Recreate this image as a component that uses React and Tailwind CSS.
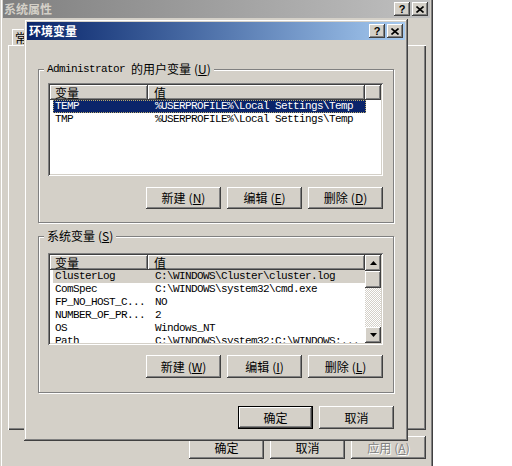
import React from "react";

const cjk = "font-[family-name:'Noto_Sans_CJK_SC',sans-serif]";
const mono = "font-[family-name:'Liberation_Mono','Noto_Sans_CJK_SC',monospace] text-[11px] tracking-[-0.6px]";
const bevel =
  "shadow-[inset_-1px_-1px_#404040,inset_1px_1px_#fff,inset_-2px_-2px_#808080,inset_2px_2px_#d4d0c8]";
const sunken =
  "shadow-[inset_1px_1px_#808080,inset_-1px_-1px_#fff,inset_2px_2px_#404040,inset_-2px_-2px_#d4d0c8]";

const CloseX = () => (
  <svg width="8" height="7" viewBox="0 0 8 7">
    <path d="M0.5 0.5 L7.5 6.5 M7.5 0.5 L0.5 6.5" stroke="#000" strokeWidth="1.6" />
  </svg>
);

const TitleButtons = () => (
  <div className="ml-auto flex gap-[2px]">
    <div className={`w-[16px] h-[14px] bg-[#d4d0c8] flex items-center justify-center ${bevel}`}>
      <span className="font-['Liberation_Sans'] font-bold text-[11px] leading-none text-black">?</span>
    </div>
    <div className={`w-[16px] h-[14px] bg-[#d4d0c8] flex items-center justify-center ${bevel}`}>
      <CloseX />
    </div>
  </div>
);

const Btn = ({ label, k, def, disabled, w = "w-[75px]", h = "h-[23px]" }) => (
  <div
    className={`${w} ${h} bg-[#d4d0c8] flex items-center justify-center text-[12px] leading-none ${cjk} ${bevel} ${
      def ? "border border-black" : ""
    } ${disabled ? "text-[#808080] [text-shadow:1px_1px_0_#fff]" : "text-black"}`}
  >
    {label}
    {k && (
      <span className="ml-[3px]">
        (<span className="underline">{k}</span>)
      </span>
    )}
  </div>
);

const Header = ({ scroll }) => (
  <div className={`flex h-[15px] text-[12px] leading-none ${cjk}`}>
    <div className={`w-[98px] flex items-center pl-[5px] bg-[#d4d0c8] ${bevel}`}>变量</div>
    <div className={`${scroll ? "flex-1" : "w-[217px]"} flex items-center pl-[6px] bg-[#d4d0c8] ${bevel}`}>值</div>
    {!scroll && <div className={`flex-1 bg-[#d4d0c8] ${bevel}`}></div>}
  </div>
);

const Row = ({ name, value, sel }) => (
  <div
    className={`ml-[3px] w-[313px] h-[13px] flex items-center whitespace-nowrap ${mono} ${
      sel === "blue"
        ? "bg-[#0a246a] text-white outline-1 outline-dotted outline-[#b8a86a] -outline-offset-1"
        : sel === "gray"
        ? "bg-[#d4d0c8] text-black"
        : "text-black"
    }`}
  >
    <div className="w-[100px] pl-[2px]">{name}</div>
    <div className="flex-1 pl-[2px] overflow-hidden">{value}</div>
  </div>
);

const Arrow = ({ up }) => (
  <div className={`h-[16px] bg-[#d4d0c8] flex items-center justify-center ${bevel}`}>
    <svg width="7" height="4" viewBox="0 0 7 4">
      {up ? <polygon points="3.5,0 7,4 0,4" fill="#000" /> : <polygon points="0,0 7,0 3.5,4" fill="#000" />}
    </svg>
  </div>
);

const Group = ({ legend, children, className }) => (
  <div
    className={`relative border border-[#808080] shadow-[1px_1px_0_#fff,inset_1px_1px_0_#fff] pl-[9px] pr-[10px] ${className}`}
  >
    <div className="absolute -top-[8px] left-[5px] px-[3px] bg-[#d4d0c8] h-[14px] flex items-center text-black">
      {legend}
    </div>
    {children}
  </div>
);

const userVars = [
  ["TEMP", "%USERPROFILE%\\Local Settings\\Temp"],
  ["TMP", "%USERPROFILE%\\Local Settings\\Temp"],
];

const sysVars = [
  ["ClusterLog", "C:\\WINDOWS\\Cluster\\cluster.log"],
  ["ComSpec", "C:\\WINDOWS\\system32\\cmd.exe"],
  ["FP_NO_HOST_C...", "NO"],
  ["NUMBER_OF_PR...", "2"],
  ["OS", "Windows_NT"],
  ["Path", "C:\\WINDOWS\\system32;C:\\WINDOWS:..."],
];

export default function App() {
  return (
    <div className="relative w-[512px] h-[466px] bg-white overflow-hidden">
      {/* 系统属性 (inactive, behind) */}
      <div className="w-[433px] h-[466px] bg-[#d4d0c8] px-[3px] flex flex-col shadow-[inset_1px_0_#d4d0c8,inset_2px_0_#fff,inset_-1px_0_#404040,inset_-2px_0_#808080]">
        <div className="h-[18px] shrink-0 bg-gradient-to-r from-[#808080] to-[#c0c0c0] flex items-center pr-[2px]">
          <span className={`pl-[1px] text-[12px] font-bold text-[#d4d0c8] ${cjk}`}>系统属性</span>
          <TitleButtons />
        </div>
        <div className="h-[27px] shrink-0 pl-[9px] flex items-end">
          <div className={`h-[16px] w-[50px] border-l border-t border-white shadow-[inset_-1px_0_#808080] pl-[2px] text-[12px] leading-[16px] ${cjk}`}>
            常
          </div>
        </div>
        <div className="ml-[5px] w-[418px] h-[385px] shrink-0 shadow-[inset_1px_1px_#fff,inset_-1px_-1px_#404040,inset_-2px_-2px_#808080]"></div>
        <div className="ml-[5px] w-[418px] mt-[6px] flex justify-end gap-[6px]">
          <Btn label="确定" />
          <Btn label="取消" />
          <Btn label="应用" k="A" disabled />
        </div>
      </div>

      {/* 环境变量 (active window on top) */}
      <div className="absolute left-[24px] top-[19px] w-[384px] h-[422px] bg-[#d4d0c8] p-[3px] shadow-[inset_-1px_-1px_#404040,inset_1px_1px_#d4d0c8,inset_-2px_-2px_#808080,inset_2px_2px_#fff]">
        <div className="h-[18px] bg-gradient-to-r from-[#0a246a] to-[#a6caf0] flex items-center pl-[2px] pr-[2px]">
          <span className={`text-white font-bold text-[12px] ${cjk}`}>环境变量</span>
          <TitleButtons />
        </div>
        <div className="px-[11px]">
          <Group
            className="mt-[29px] h-[154px] pt-[13px]"
            legend={
              <>
                <span className={mono}>Administrator</span>
                <span className={`text-[12px] ml-[6px] ${cjk}`}>的用户变量</span>
                <span className={`text-[12px] ml-[3px] ${cjk}`}>
                  (<span className="underline">U</span>)
                </span>
              </>
            }
          >
            <div className={`h-[93px] bg-white p-[2px] overflow-hidden ${sunken}`}>
              <Header />
              {userVars.map(([n, v], i) => (
                <Row key={n} name={n} value={v} sel={i === 0 ? "blue" : null} />
              ))}
            </div>
            <div className="mt-[11px] flex justify-end gap-[6px]">
              <Btn label="新建" k="N" h="h-[22px]" />
              <Btn label="编辑" k="E" h="h-[22px]" />
              <Btn label="删除" k="D" h="h-[22px]" />
            </div>
          </Group>

          <Group
            className="mt-[13px] h-[157px] pt-[16px]"
            legend={
              <>
                <span className={`text-[12px] ${cjk}`}>系统变量</span>
                <span className={`text-[12px] ml-[3px] ${cjk}`}>
                  (<span className="underline">S</span>)
                </span>
              </>
            }
          >
            <div className={`h-[92px] bg-white p-[2px] flex overflow-hidden ${sunken}`}>
              <div className="flex-1 overflow-hidden">
                <Header scroll />
                {sysVars.map(([n, v], i) => (
                  <Row key={n} name={n} value={v} sel={i === 0 ? "gray" : null} />
                ))}
              </div>
              <div className="w-[16px] flex flex-col">
                <Arrow up />
                <div className={`h-[17px] bg-[#d4d0c8] ${bevel}`}></div>
                <div className="flex-1 bg-[repeating-conic-gradient(#fff_0_25%,#d4d0c8_0_50%)] bg-[length:2px_2px]"></div>
                <Arrow />
              </div>
            </div>
            <div className="mt-[10px] flex justify-end gap-[6px]">
              <Btn label="新建" k="W" />
              <Btn label="编辑" k="I" />
              <Btn label="删除" k="L" />
            </div>
          </Group>

          <div className="mt-[13px] flex justify-end gap-[6px]">
            <Btn label="确定" def />
            <Btn label="取消" />
          </div>
        </div>
      </div>
    </div>
  );
}
